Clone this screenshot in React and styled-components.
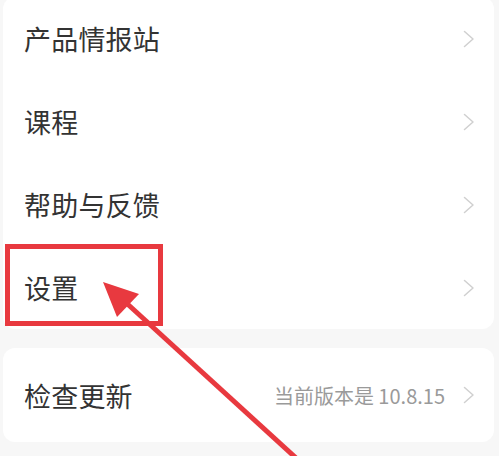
import React from "react";
import styled, { createGlobalStyle } from "styled-components";

const GlobalStyle = createGlobalStyle`
  html, body {
    margin: 0;
    padding: 0;
    background: #f7f7f7;
    overflow: hidden;
  }
  body {
    font-family: "Noto Sans CJK SC", "Noto Sans", sans-serif;
  }
`;

const Page = styled.div`
  position: relative;
  width: 499px;
  height: 456px;
  overflow: hidden;
  background: #f7f7f7;
  padding: 0 5px 0 3px;
  box-sizing: border-box;
`;

const Card = styled.div`
  background: #fff;
  border-radius: 12px;
  margin-top: ${(p) => p.$top || 0}px;
`;

const Row = styled.div`
  position: relative;
  height: ${(p) => p.$h || 83}px;
  display: flex;
  align-items: center;
  justify-content: space-between;
  padding: 0 19px 0 21px;
`;

const Label = styled.span`
  font-size: 27px;
  color: #333;
  letter-spacing: 0.2px;
`;

const Right = styled.div`
  display: flex;
  align-items: center;
  gap: 18px;
`;

const Hint = styled.span`
  font-size: 20px;
  color: #9a9a9a;
`;

const Highlight = styled.div`
  position: absolute;
  left: 2px;
  top: -2px;
  width: 158px;
  height: 82px;
  border: 5px solid #e8393f;
  box-sizing: border-box;
  pointer-events: none;
`;

const Overlay = styled.svg`
  position: absolute;
  left: 0;
  top: 0;
  pointer-events: none;
`;

const Chevron = () => (
  <svg width="12" height="18" viewBox="0 0 12 18">
    <polyline
      points="1.5,1.5 10,9 1.5,16.5"
      fill="none"
      stroke="#d0d0d0"
      strokeWidth="1.5"
      strokeLinecap="round"
      strokeLinejoin="round"
    />
  </svg>
);

const items = ["产品情报站", "课程", "帮助与反馈", "设置"];

export default function App() {
  return (
    <>
      <GlobalStyle />
      <Page>
        <Card $top={-3}>
          {items.map((t) => (
            <Row key={t}>
              <Label>{t}</Label>
              <Chevron />
              {t === "设置" && <Highlight />}
            </Row>
          ))}
        </Card>
        <Card $top={19}>
          <Row $h={94}>
            <Label>检查更新</Label>
            <Right>
              <Hint>当前版本是 10.8.15</Hint>
              <Chevron />
            </Right>
          </Row>
        </Card>
        <Overlay width="499" height="456" viewBox="0 0 499 456">
          <line
            x1="296"
            y1="458"
            x2="122"
            y2="299"
            stroke="#e8393f"
            strokeWidth="5"
          />
          <polygon points="103,282 139,294 117,317" fill="#e8393f" />
        </Overlay>
      </Page>
    </>
  );
}
